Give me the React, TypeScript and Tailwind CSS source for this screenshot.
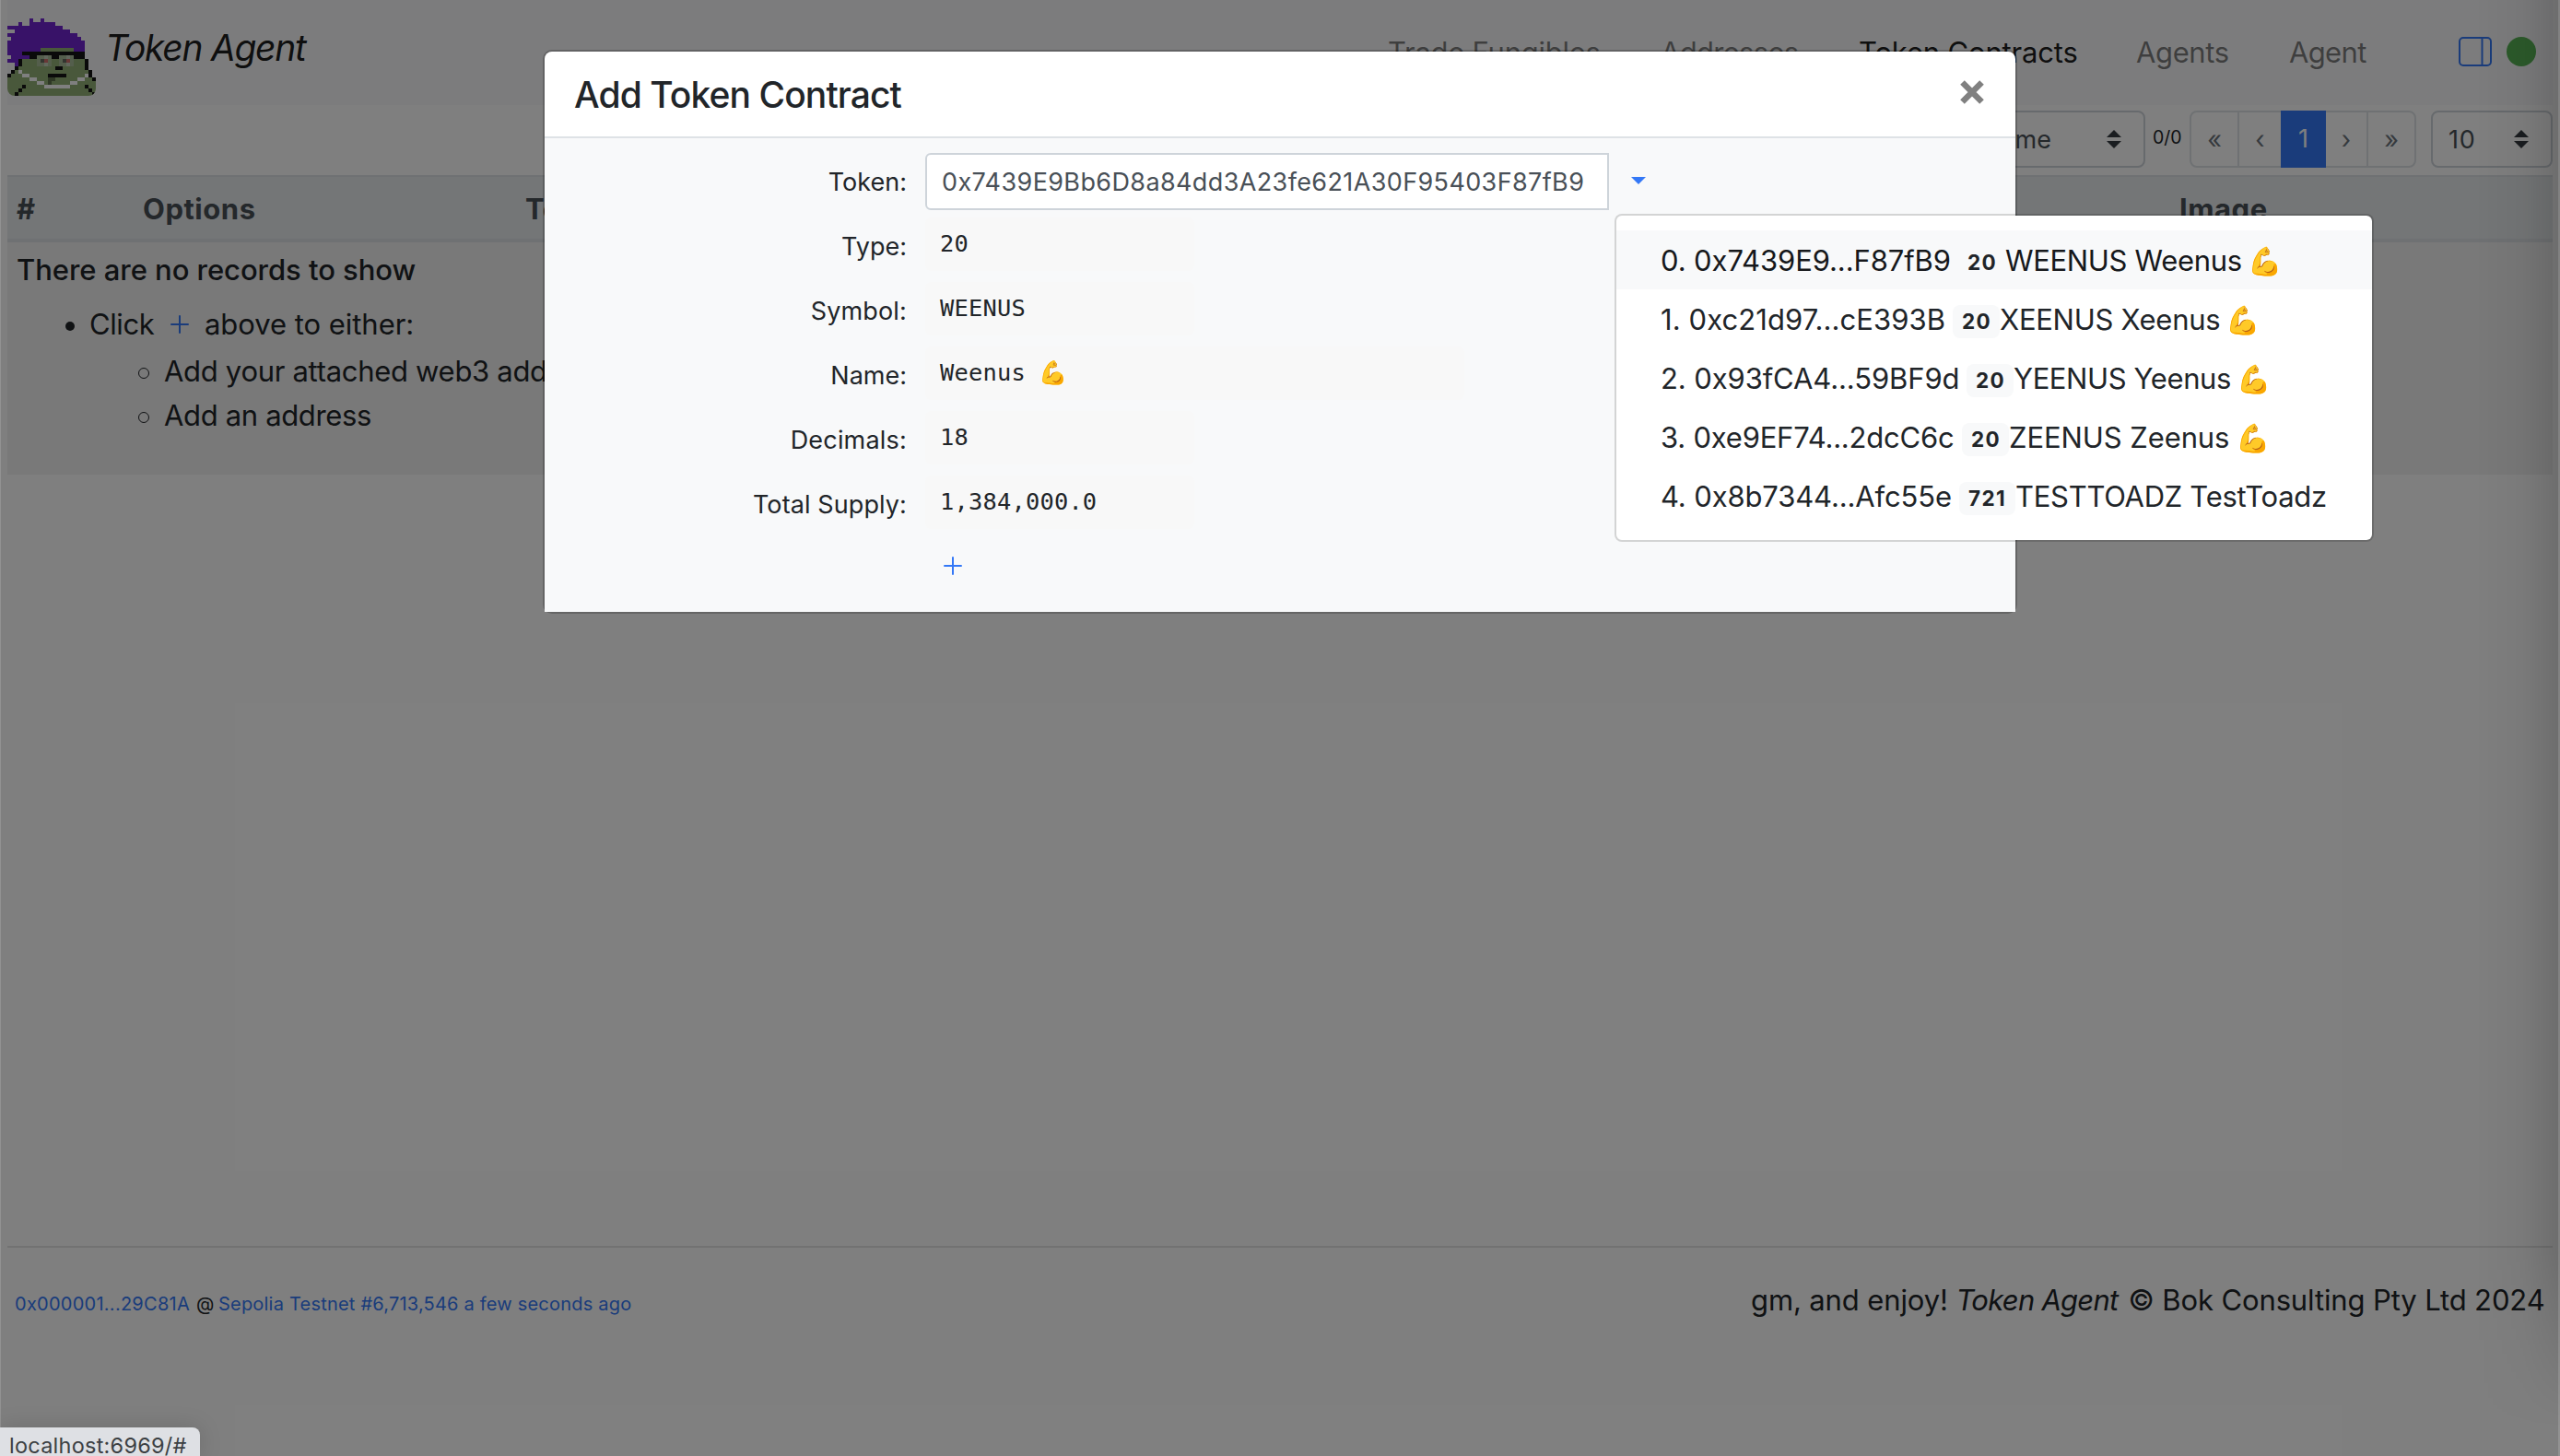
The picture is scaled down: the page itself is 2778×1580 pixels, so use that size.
import React from "react";

const PURPLE = "#7024d0";
const GREEN = "#92b076";
const BLACK = "#141414";
const WHITE = "#ffffff";

// [colour, row, first column, end column] on a 24x24 grid
const PIXELS: [string, number, number, number][] = [
  [PURPLE, 5, 6, 7], [PURPLE, 5, 9, 10],
  [PURPLE, 6, 3, 4], [PURPLE, 6, 6, 13],
  [PURPLE, 7, 0, 15],
  [PURPLE, 8, 2, 17],
  [PURPLE, 9, 0, 19],
  [PURPLE, 10, 1, 20],
  [PURPLE, 11, 0, 21],
  [PURPLE, 12, 0, 21],
  [PURPLE, 13, 0, 21],
  [PURPLE, 14, 0, 5],
  [PURPLE, 15, 1, 6],
  [PURPLE, 16, 0, 3],
  [PURPLE, 17, 2, 3],
  [GREEN, 13, 9, 18],
  [GREEN, 15, 6, 21],
  [GREEN, 16, 3, 21],
  [GREEN, 17, 3, 21],
  [GREEN, 18, 3, 22],
  [GREEN, 19, 2, 22],
  [GREEN, 20, 1, 23],
  [GREEN, 21, 0, 24],
  [GREEN, 22, 0, 24],
  [GREEN, 23, 0, 24],
  [GREEN, 24, 0, 24],
  [GREEN, 25, 0, 24],
  [BLACK, 14, 4, 21],
  [BLACK, 15, 6, 8], [BLACK, 15, 12, 14], [BLACK, 15, 18, 21],
  ["#a9bd98", 15, 8, 12], ["#a9bd98", 16, 8, 12], ["#a9bd98", 17, 8, 12],
  ["#a9bd98", 15, 14, 18], ["#a9bd98", 16, 14, 18], ["#a9bd98", 17, 14, 18],
  ["#c4cfba", 15, 10, 11], ["#c4cfba", 17, 10, 11],
  ["#c4cfba", 15, 16, 17], ["#c4cfba", 17, 16, 17],
  ["#666a60", 16, 9, 10], ["#d0706c", 16, 10, 11],
  ["#666a60", 16, 15, 16], ["#d0706c", 16, 16, 17],
  [BLACK, 16, 3, 4], [BLACK, 17, 3, 4], [BLACK, 18, 2, 3], [BLACK, 19, 1, 2], [BLACK, 20, 0, 1],
  [BLACK, 16, 21, 22], [BLACK, 17, 21, 22], [BLACK, 18, 21, 22],
  [BLACK, 19, 22, 23], [BLACK, 20, 22, 23], [BLACK, 21, 23, 24],
  [BLACK, 18, 13, 15],
  [BLACK, 20, 11, 16],
  ["#5c6e4a", 21, 11, 13], ["#5c6e4a", 22, 11, 12],
  [WHITE, 19, 3, 4], [WHITE, 20, 4, 6], [WHITE, 21, 6, 8], [WHITE, 22, 8, 10],
  [WHITE, 23, 10, 17], [WHITE, 22, 17, 19], [WHITE, 21, 19, 21], [WHITE, 20, 21, 22],
  [BLACK, 23, 4, 5], [BLACK, 24, 3, 4], [BLACK, 25, 2, 3],
  [BLACK, 23, 21, 22], [BLACK, 24, 22, 23], [BLACK, 25, 23, 24],
];

function Avatar() {
  return (
    <svg viewBox="0 2 24 24" shapeRendering="crispEdges" className="mt-2 size-24 shrink-0 rounded-lg">
      {PIXELS.map(([fill, row, a, b], i) => (
        <rect key={i} x={a} y={row} width={b - a} height={1} fill={fill} />
      ))}
    </svg>
  );
}

function Plus({ className = "" }: { className?: string }) {
  return (
    <svg viewBox="0 0 20 20" className={`size-5 shrink-0 ${className}`} stroke="#3478f6" strokeWidth="2" strokeLinecap="round">
      <path d="M10 1v18M1 10h18" />
    </svg>
  );
}

function SelectArrow() {
  return (
    <svg viewBox="0 0 4 5" className="h-5 w-4 shrink-0" fill="#343a40">
      <path d="M2 0L0 2h4zm0 5L0 3h4z" />
    </svg>
  );
}

const NAV = [
  { label: "Trade Fungibles", cls: "w-[296px] tracking-[-0.25px] text-black/50" },
  { label: "Addresses", cls: "w-[215px] tracking-[-0.7px] text-black/50" },
  { label: "Token Contracts", cls: "w-[301px] tracking-[-0.18px] text-black/90" },
  { label: "Agents", cls: "w-[166px] tracking-[-0.37px] text-black/50" },
  { label: "Agent", cls: "w-[184px] tracking-[-0.65px] text-black/50" },
];

function Header() {
  return (
    <header className="mx-2 flex h-[114px] items-start bg-[#f8f9fa]">
      <Avatar />
      <span className="ml-[10px] mt-[22px] text-[39px] italic leading-[60px] tracking-[-1.29px] text-black/90">Token Agent</span>
      <nav className="ml-auto mt-[33px] flex h-12 items-center text-[31px] leading-[48px]">
        {NAV.map((n) => (
          <span key={n.label} className={`shrink-0 whitespace-nowrap ${n.cls}`}>{n.label}</span>
        ))}
      </nav>
      <div className="mr-[18px] mt-10 flex items-center gap-4">
        <svg viewBox="0 0 36 32" className="h-8 w-9" fill="none" stroke="#3478f6" strokeWidth="2">
          <rect x="1" y="1" width="34" height="30" rx="4" />
          <path d="M25.5 1v30" />
        </svg>
        <span className="size-8 rounded-full bg-[#58b556]" />
      </div>
    </header>
  );
}

function Toolbar() {
  return (
    <div className="mx-2 mt-[6px] flex h-[62px] justify-end text-[27px] leading-[58px]">
      <div className="flex w-[196px] items-center justify-between rounded-lg border-2 border-[#ced4da] bg-white pl-[17px] pr-6 text-[#495057]">
        <span className="pt-px">Name</span>
        <SelectArrow />
      </div>
      <span className="ml-2 w-10 text-[19.5px] tracking-[-0.1px] text-[#212529]">0/0</span>
      <div className="flex w-[246px] rounded-lg border-2 border-[#dee2e6] bg-white text-center text-[#6c757d]">
        <span className="w-[52px] border-r-2 border-[#dee2e6] pt-px">«</span>
        <span className="w-[45px] pt-px">‹</span>
        <span className="-my-[2px] w-[49px] bg-[#3478f6] leading-[62px] text-white">1</span>
        <span className="w-[46px] border-r-2 border-[#dee2e6] pt-px">›</span>
        <span className="w-[50px] pt-px">»</span>
      </div>
      <div className="ml-4 flex w-[132px] items-center justify-between rounded-lg border-2 border-[#ced4da] bg-white pl-[17px] pr-6 text-[#495057]">
        <span className="pt-px tracking-[0.8px]">10</span>
        <SelectArrow />
      </div>
    </div>
  );
}

function Table() {
  return (
    <section className="mx-2 mt-2 text-[31px] leading-[48px] text-[#212529]">
      <div className="grid h-[73px] grid-cols-[137px_415px_1795px_1fr] items-center border-b-4 border-t-2 border-[#dee2e6] bg-[#e9ecef] pl-[10px] pt-[3px] font-bold tracking-[0.53px] text-[#495057]">
        <span>#</span>
        <span>Options</span>
        <span>Token</span>
        <span>Image</span>
      </div>
      <div className="h-[252px] bg-[#f2f2f2] pl-[10px] pt-[6px]">
        <p className="font-medium tracking-[-0.04px]">There are no records to show</p>
        <div className="ml-[53px] mt-[11px] flex items-center">
          <span className="mt-1 size-[10px] rounded-full bg-[#212529]" />
          <span className="ml-[16px] w-[88px] tracking-[-0.4px]">Click</span>
          <Plus />
          <span className="ml-[17px] tracking-[-0.04px]">above to either:</span>
        </div>
        <div className="ml-[132px] mt-[3px] flex items-center">
          <span className="mt-1 size-3 rounded-full border-[1.5px] border-[#212529]" />
          <span className="ml-4 whitespace-nowrap tracking-[-0.3px]">Add your attached web3 address</span>
        </div>
        <div className="ml-[132px] flex items-center">
          <span className="mt-1 size-3 rounded-full border-[1.5px] border-[#212529]" />
          <span className="ml-4 tracking-[-0.34px]">Add an address</span>
        </div>
      </div>
    </section>
  );
}

function Footer() {
  return (
    <footer className="mx-2 mt-[837px] flex justify-between border-t-2 border-black/10 pr-2 text-[#212529]">
      <p className="ml-2 mt-[41px] flex text-xl leading-10">
        <span className="w-[197px] tracking-[0.26px] text-[#3478f6]">0x000001...29C81A</span>
        <span className="w-6">@</span>
        <span className="whitespace-nowrap tracking-[0.21px] text-[#3478f6]">Sepolia Testnet #6,713,546 a few seconds ago</span>
      </p>
      <p className="mt-[33px] flex w-[862px] whitespace-nowrap text-[31px] leading-[48px]">
        <span className="w-[222.5px] shrink-0 tracking-[-0.12px]">gm, and enjoy!</span>
        <em className="w-[187px] shrink-0 tracking-[-0.75px]">Token Agent</em>
        <span className="tracking-[-0.12px]">© Bok Consulting Pty Ltd 2024</span>
      </p>
    </footer>
  );
}

const FIELDS = [
  { label: "Type:", value: "20", box: "w-[292px]", ls: "" },
  { label: "Symbol:", value: "WEENUS", box: "w-[292px]", ls: "tracking-[0.15px]" },
  { label: "Name:", value: "Weenus", emoji: true, box: "w-[585px]", ls: "" },
  { label: "Decimals:", value: "18", box: "w-[292px]", ls: "tracking-[0.2px]" },
  { label: "Total Supply:", value: "1,384,000.0", box: "w-[292px]", ls: "tracking-[0.1px]" },
];

const TOKENS = [
  { addr: "0. 0x7439E9...F87fB9", a: "w-[323px] tracking-[-0.1px]", type: "20", b: "w-[51px]", name: "WEENUS Weenus", n: "w-[263px] tracking-[-0.33px]", emoji: true },
  { addr: "1. 0xc21d97...cE393B", a: "w-[317px] tracking-[0.08px]", type: "20", b: "w-[51px]", name: "XEENUS Xeenus", n: "w-[245px] tracking-[-0.27px]", emoji: true },
  { addr: "2. 0x93fCA4...59BF9d", a: "w-[332px] tracking-[-0.1px]", type: "20", b: "w-[51px]", name: "YEENUS Yeenus", n: "w-[242px] tracking-[-0.4px]", emoji: true },
  { addr: "3. 0xe9EF74...2dcC6c", a: "w-[327px] tracking-[-0.22px]", type: "20", b: "w-[51px]", name: "ZEENUS Zeenus", n: "w-[246px] tracking-[-0.08px]", emoji: true },
  { addr: "4. 0x8b7344...Afc55e", a: "w-[324px] tracking-[-0.14px]", type: "721", b: "w-[61px]", name: "TESTTOADZ TestToadz", n: "tracking-[-0.29px]", emoji: false },
];

function TokenMenu() {
  return (
    <div className="absolute left-[6px] top-[66px] z-10 w-[824px] rounded-lg border-2 border-black/15 bg-white bg-clip-padding py-4 text-[31px] leading-[62px] text-[#212529]">
      {TOKENS.map((t, i) => (
        <div key={t.addr} className={`flex h-16 items-center whitespace-nowrap pl-12 pt-[2px] ${i === 0 ? "bg-[#f8f9fa] text-[#16181b]" : ""}`}>
          <span className={`shrink-0 ${t.a}`}>{t.addr}</span>
          <span className={`mt-1 h-9 shrink-0 rounded-lg bg-[#f8f9fa] pl-[10px] text-[22.5px] font-bold leading-9 tracking-[1.4px] text-[#212529] ${t.b}`}>{t.type}</span>
          <span className={`shrink-0 ${t.n}`}>{t.name}</span>
          {t.emoji && <span className="text-[30px]">💪</span>}
        </div>
      ))}
    </div>
  );
}

function Modal() {
  return (
    <div className="absolute inset-0 flex items-start justify-center pt-[54px]">
      <div className="w-[1600px] rounded-[10px] border-2 border-black/20 bg-clip-padding text-[#212529]">
        <div className="flex h-[94px] items-center justify-between rounded-t-lg border-b-2 border-[#dee2e6] bg-white pl-8 pr-[34px]">
          <h5 className="mt-[2px] text-[39px] font-medium leading-[60px] tracking-[-0.91px]">Add Token Contract</h5>
          <svg viewBox="0 0 26 26" className="mb-1 size-[26px]" stroke="#808080" strokeWidth="6.5">
            <path d="M2.5 2.5l21 21M23.5 2.5l-21 21" />
          </svg>
        </div>
        <div className="h-[514px] bg-[#f8f9fa] pt-4 text-[27px] leading-[62px]">
          <div className="flex h-[70px]">
            <label className="w-[393px] pt-px text-right">Token:</label>
            <div className="ml-5 h-[62px] w-[742px] rounded-l-md border-2 border-[#ced4da] bg-white pl-4 pt-px leading-[58px] tracking-[0.38px] text-[#495057]">
              0x7439E9Bb6D8a84dd3A23fe621A30F95403F87fB9
            </div>
            <div className="relative h-[62px]">
              <svg viewBox="0 0 16 8" className="ml-6 mt-[26px] h-2 w-4" fill="#3478f6">
                <path d="M0 0h16L8 8z" />
              </svg>
              <TokenMenu />
            </div>
          </div>
          {FIELDS.map((f) => (
            <div key={f.label} className="flex h-[70px]">
              <label className={`w-[393px] pt-px text-right ${f.ls}`}>{f.label}</label>
              <div className={`ml-5 flex h-[58px] rounded-md bg-[#f8f8f8] pl-4 font-['DejaVu_Sans_Mono'] text-[25.4px] leading-[57px] tracking-[0.2px] ${f.box}`}>
                <span className={f.emoji ? "w-[107px]" : ""}>{f.value}</span>
                {f.emoji && <span className="text-[25px]">💪</span>}
              </div>
            </div>
          ))}
          <div className="flex h-14 items-center">
            <Plus className="ml-[433px]" />
          </div>
        </div>
      </div>
    </div>
  );
}

export default function App() {
  return (
    <div className="relative h-[1580px] w-[2778px] overflow-hidden bg-white font-['Inter',sans-serif]">
      <Header />
      <Toolbar />
      <Table />
      <Footer />
      <div className="absolute inset-0 bg-black/50" />
      <div className="absolute right-0 top-0 h-full w-[90px] bg-[linear-gradient(to_right,transparent,rgba(0,0,0,0.04)_55%,rgba(0,0,0,0.14))] [mask-image:linear-gradient(to_bottom,black_86%,transparent_98%)]" />
      <div className="absolute right-0 top-0 h-full w-[2px] bg-white/15" />
      <div className="absolute left-0 top-0 h-full w-px bg-white/15" />
      <Modal />
      <div className="absolute bottom-0 left-0 h-[31px] w-[217px] rounded-tr-lg bg-[#dee0e4] pl-[10px] pt-[9px] text-[23.5px] leading-[22px] tracking-[0.24px] text-[#3c4043] shadow-[0_0_24px_rgba(0,0,0,0.15)]">
        localhost:6969/#
      </div>
    </div>
  );
}
